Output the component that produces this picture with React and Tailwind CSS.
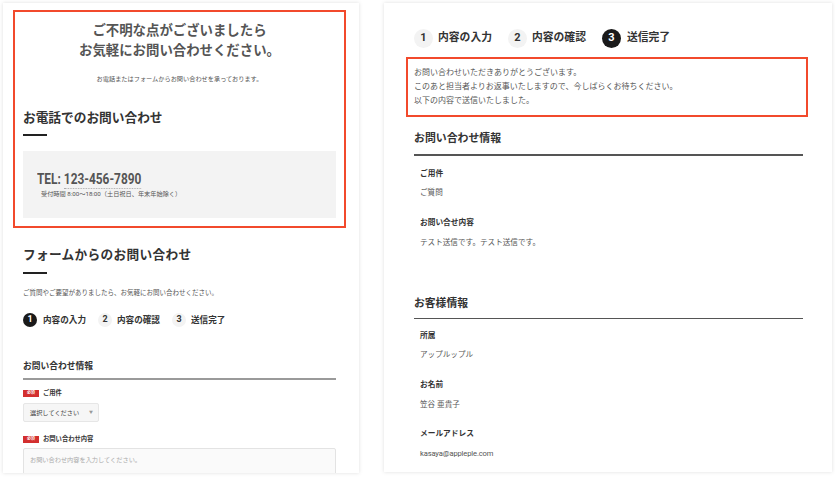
import React from "react";

const FONT = { fontFamily: 'Roboto, "Noto Sans CJK JP", sans-serif' };

function Badge() {
  return (
    <span className="inline-flex h-[7px] w-[16px] items-center justify-center bg-[#d32f2f] text-[4px] font-bold leading-none text-white">
      必須
    </span>
  );
}

function Step({ n, label, active, circle, text, gap }) {
  return (
    <div className={`flex items-center ${gap}`}>
      <span
        className={`flex items-center justify-center rounded-full font-bold ${circle} ${
          active ? "bg-[#1a1a1a] text-white" : "bg-[#f3f3f3] text-[#333]"
        }`}
      >
        {n}
      </span>
      <span className={`font-bold text-[#333] ${text}`}>{label}</span>
    </div>
  );
}

function LeftCard() {
  return (
    <div className="h-[470px] w-[356px] shrink-0 overflow-hidden bg-white shadow-[0_0_4px_rgba(0,0,0,0.13)]">
      <div className="ml-[10px] mr-[13px] mt-[7px] border-2 border-[#f24a2c] px-[8px] pb-[8px] pt-[9px]">
        <h1 className="text-center text-[13.4px] font-bold leading-[20px] text-[#555]">
          ご不明な点がございましたら
          <br />
          お気軽にお問い合わせください。
        </h1>
        <p className="mt-[13px] text-center text-[6.2px] leading-[10px] text-[#555]">
          お電話またはフォームからお問い合わせを承っております。
        </p>
        <h2 className="mt-[25px] text-[12.7px] font-bold leading-[18px] text-[#333]">
          お電話でのお問い合わせ
        </h2>
        <div className="mt-[7px] h-[2px] w-[24px] bg-[#222]" />
        <div className="mt-[15px] h-[67px] bg-[#f3f3f3] pl-[14px] pt-[20px]">
          <div className="h-[18px] text-[14.5px] font-bold leading-[18px] text-[#555]">
            <span className="inline-block origin-left scale-x-[0.82] whitespace-nowrap">
              TEL:{" "}
              <span className="border-b border-dotted border-[#aaa]">123-456-7890</span>
            </span>
          </div>
          <p className="mt-[1px] pl-[4px] text-[6.2px] leading-[8px] text-[#555]">
            受付時間 8:00〜18:00（土日祝日、年末年始除く）
          </p>
        </div>
      </div>

      <div className="pl-[20px] pr-[23px]">
        <h2 className="mt-[18px] text-[12.7px] font-bold leading-[18px] tracking-[0.3px] text-[#333]">
          フォームからのお問い合わせ
        </h2>
        <div className="mt-[8px] h-[2px] w-[24px] bg-[#222]" />
        <p className="mt-[14px] text-[6.5px] leading-[10px] text-[#555]">
          ご質問やご要望がありましたら、お気軽にお問い合わせください。
        </p>
        <div className="mt-[15px] flex items-center gap-[12px]">
          <Step n="1" label="内容の入力" active circle="h-[14px] w-[14px] text-[9px]" text="text-[8.6px]" gap="gap-[6px]" />
          <Step n="2" label="内容の確認" circle="h-[14px] w-[14px] text-[9px]" text="text-[8.6px]" gap="gap-[5px]" />
          <Step n="3" label="送信完了" circle="h-[14px] w-[14px] text-[9px]" text="text-[8.6px]" gap="gap-[5px]" />
        </div>
        <h3 className="mt-[33px] text-[8.75px] font-bold leading-[12px] text-[#333]">
          お問い合わせ情報
        </h3>
        <div className="mt-[6px] h-[2px] w-full bg-[#9a9a9a]" />
        <div className="mt-[9px] flex h-[8px] items-center gap-[4px]">
          <Badge />
          <span className="text-[6.3px] font-bold leading-[8px] text-[#333]">ご用件</span>
        </div>
        <div className="mt-[6px] flex h-[19px] w-[76px] items-center justify-between rounded-[2px] border border-[#e6e6e6] bg-[#f6f6f6] pl-[6px] pr-[5px]">
          <span className="text-[6.2px] leading-[8px] text-[#444]">選択してください</span>
          <span className="text-[4px] leading-[8px] text-[#999]">▼</span>
        </div>
        <div className="mt-[13px] flex h-[8px] items-center gap-[4px]">
          <Badge />
          <span className="text-[6.3px] font-bold leading-[8px] text-[#333]">お問い合わせ内容</span>
        </div>
        <div className="mt-[5px] h-[60px] w-full rounded-[2px] border border-[#e3e3e3] bg-[#fafafa] pl-[6px] pt-[6px]">
          <p className="text-[6.2px] leading-[10px] text-[#aaa]">お問い合わせ内容を入力してください。</p>
        </div>
      </div>
    </div>
  );
}

function RightCard() {
  return (
    <div className="h-[469px] w-[448px] shrink-0 overflow-hidden bg-white shadow-[0_0_4px_rgba(0,0,0,0.13)]">
      <div className="flex items-center gap-[16px] pl-[30px] pt-[26px]">
        <Step n="1" label="内容の入力" circle="h-[19px] w-[19px] text-[11px]" text="text-[10.8px]" gap="gap-[5px]" />
        <Step n="2" label="内容の確認" circle="h-[19px] w-[19px] text-[11px]" text="text-[10.8px]" gap="gap-[5px]" />
        <Step n="3" label="送信完了" active circle="h-[19px] w-[19px] text-[11px]" text="text-[10.8px]" gap="gap-[6px]" />
      </div>
      <div className="ml-[22px] mr-[24px] mt-[9px] border-2 border-[#f24a2c] pb-[7px] pl-[6px] pt-[7px] text-[8px] leading-[14px] text-[#555]">
        <p>お問い合わせいただきありがとうございます。</p>
        <p>このあと担当者よりお返事いたしますので、今しばらくお待ちください。</p>
        <p>以下の内容で送信いたしました。</p>
      </div>
      <div className="pl-[30px] pr-[29px]">
        <h3 className="mt-[14px] text-[10.9px] font-bold leading-[16px] text-[#333]">お問い合わせ情報</h3>
        <div className="mt-[7px] h-[1.5px] w-full bg-[#555]" />
        <div className="pl-[6px]">
          <div className="mt-[12px] text-[7.7px] font-bold leading-[12px] text-[#333]">ご用件</div>
          <div className="mt-[7px] text-[7.6px] leading-[12px] text-[#555]">ご質問</div>
          <div className="mt-[18px] text-[7.7px] font-bold leading-[12px] text-[#333]">お問い合せ内容</div>
          <div className="mt-[8px] text-[7.6px] leading-[12px] text-[#555]">テスト送信です。テスト送信です。</div>
        </div>
        <h3 className="mt-[47px] text-[10.8px] font-bold leading-[16px] text-[#333]">お客様情報</h3>
        <div className="mt-[6px] h-[1.5px] w-full bg-[#555]" />
        <div className="pl-[6px]">
          <div className="mt-[11px] text-[7.7px] font-bold leading-[12px] text-[#333]">所属</div>
          <div className="mt-[7px] text-[7.6px] leading-[12px] text-[#555]">アップルップル</div>
          <div className="mt-[18px] text-[7.7px] font-bold leading-[12px] text-[#333]">お名前</div>
          <div className="mt-[8px] text-[7.6px] leading-[12px] text-[#555]">笠谷 亜貴子</div>
          <div className="mt-[17px] text-[7.7px] font-bold leading-[12px] text-[#333]">メールアドレス</div>
          <div className="mt-[8px] text-[7.6px] leading-[12px] tracking-[-0.15px] text-[#555]">kasaya@appleple.com</div>
        </div>
      </div>
    </div>
  );
}

export default function App() {
  return (
    <div style={FONT} className="flex h-[479px] w-[835px] gap-[25px] overflow-hidden bg-white pl-[3px] pt-[3px]">
      <LeftCard />
      <RightCard />
    </div>
  );
}
